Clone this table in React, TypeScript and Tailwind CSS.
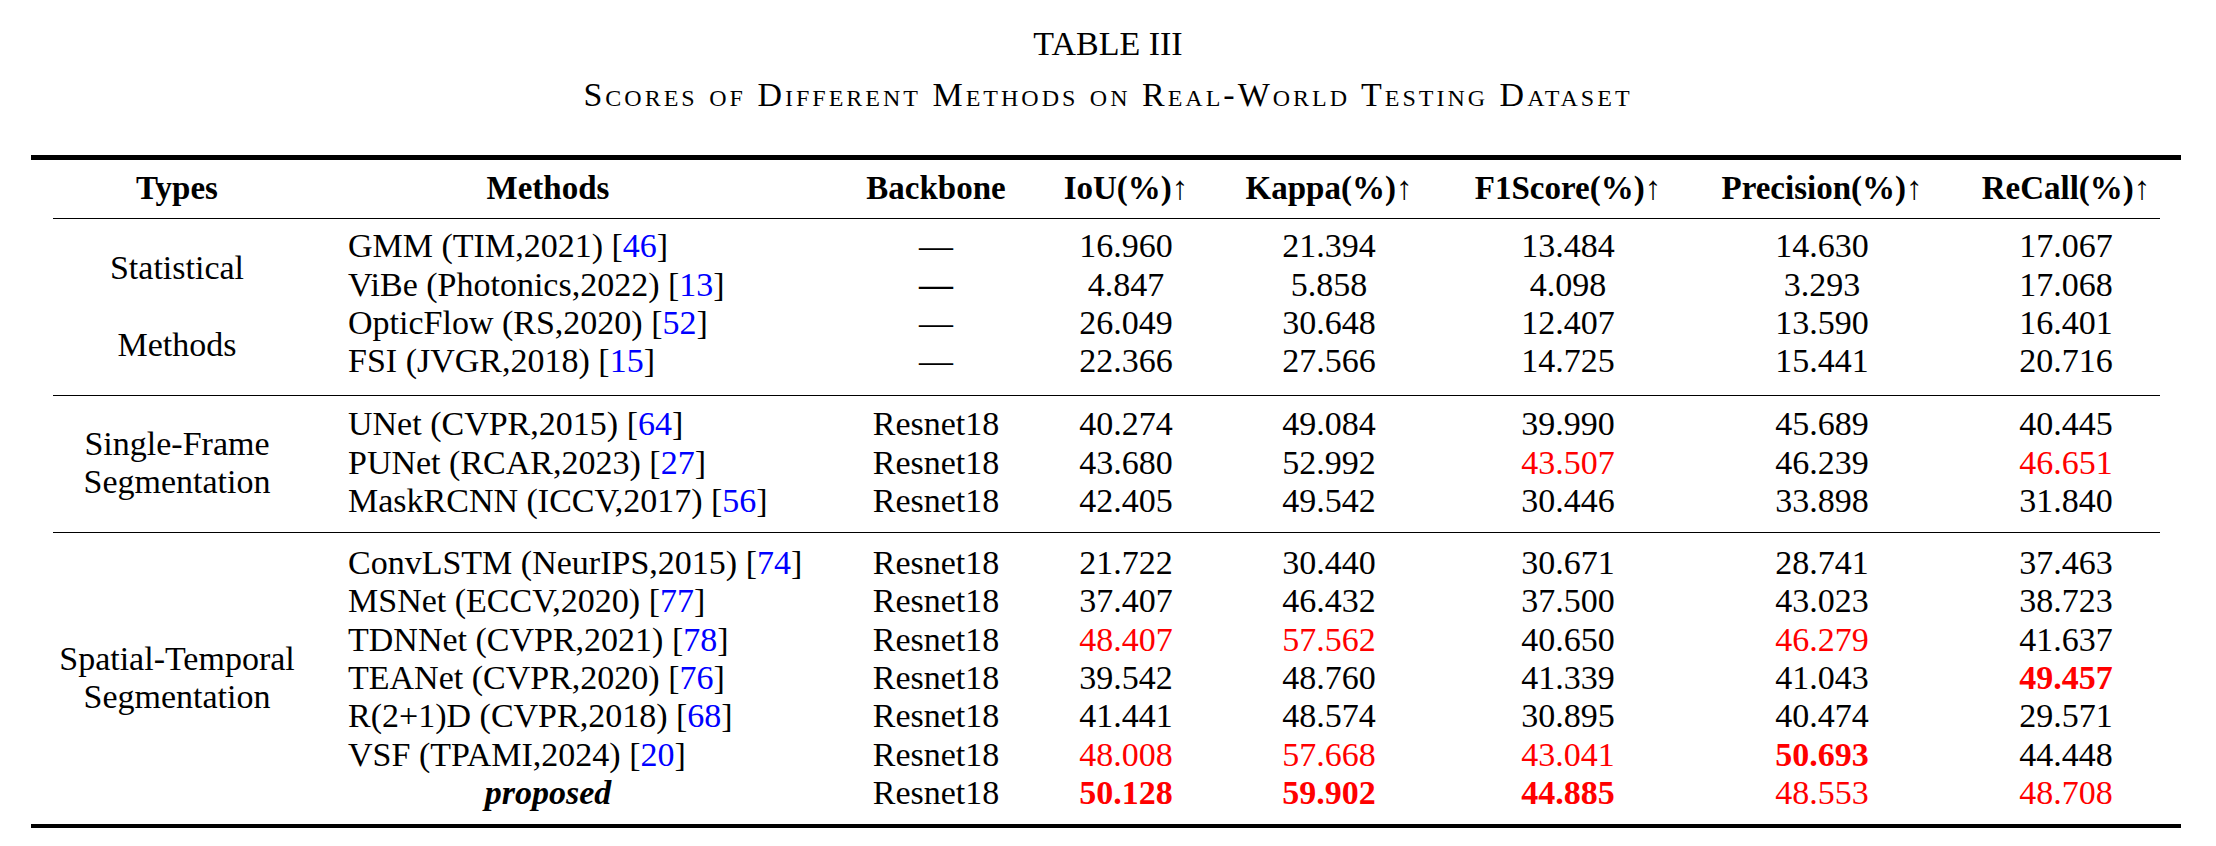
import React from "react";

type Score = { v: string; red?: boolean; bold?: boolean };

interface Row {
  method: string;
  venue: string;
  cite?: string;
  backbone: string;
  dashBold?: boolean;
  scores: Score[];
}

// "r" = red, "rb" = red bold
const s = (v: string, mark?: "r" | "rb"): Score => ({
  v,
  red: mark === "r" || mark === "rb",
  bold: mark === "rb",
});

const nums = (...vals: string[]) => vals.map((v) => s(v));

const statistical: Row[] = [
  { method: "GMM", venue: "(TIM,2021)", cite: "46", backbone: "—", scores: nums("16.960", "21.394", "13.484", "14.630", "17.067") },
  { method: "ViBe", venue: "(Photonics,2022)", cite: "13", backbone: "—", dashBold: true, scores: nums("4.847", "5.858", "4.098", "3.293", "17.068") },
  { method: "OpticFlow", venue: "(RS,2020)", cite: "52", backbone: "—", scores: nums("26.049", "30.648", "12.407", "13.590", "16.401") },
  { method: "FSI", venue: "(JVGR,2018)", cite: "15", backbone: "—", scores: nums("22.366", "27.566", "14.725", "15.441", "20.716") },
];

const singleFrame: Row[] = [
  { method: "UNet", venue: "(CVPR,2015)", cite: "64", backbone: "Resnet18", scores: nums("40.274", "49.084", "39.990", "45.689", "40.445") },
  { method: "PUNet", venue: "(RCAR,2023)", cite: "27", backbone: "Resnet18", scores: [s("43.680"), s("52.992"), s("43.507", "r"), s("46.239"), s("46.651", "r")] },
  { method: "MaskRCNN", venue: "(ICCV,2017)", cite: "56", backbone: "Resnet18", scores: nums("42.405", "49.542", "30.446", "33.898", "31.840") },
];

const spatialTemporal: Row[] = [
  { method: "ConvLSTM", venue: "(NeurIPS,2015)", cite: "74", backbone: "Resnet18", scores: nums("21.722", "30.440", "30.671", "28.741", "37.463") },
  { method: "MSNet", venue: "(ECCV,2020)", cite: "77", backbone: "Resnet18", scores: nums("37.407", "46.432", "37.500", "43.023", "38.723") },
  { method: "TDNNet", venue: "(CVPR,2021)", cite: "78", backbone: "Resnet18", scores: [s("48.407", "r"), s("57.562", "r"), s("40.650"), s("46.279", "r"), s("41.637")] },
  { method: "TEANet", venue: "(CVPR,2020)", cite: "76", backbone: "Resnet18", scores: [s("39.542"), s("48.760"), s("41.339"), s("41.043"), s("49.457", "rb")] },
  { method: "R(2+1)D", venue: "(CVPR,2018)", cite: "68", backbone: "Resnet18", scores: nums("41.441", "48.574", "30.895", "40.474", "29.571") },
  { method: "VSF", venue: "(TPAMI,2024)", cite: "20", backbone: "Resnet18", scores: [s("48.008", "r"), s("57.668", "r"), s("43.041", "r"), s("50.693", "rb"), s("44.448")] },
  { method: "proposed", venue: "", backbone: "Resnet18", scores: [s("50.128", "rb"), s("59.902", "rb"), s("44.885", "rb"), s("48.553", "r"), s("48.708", "r")] },
];

const headers = ["IoU", "Kappa", "F1Score", "Precision", "ReCall"];

// padding that re-centres a column whose track also holds the gap on its left
const scorePad = ["", "", "", "pl-[8px]", "pl-[19px]"];

const gridCols =
  "grid grid-cols-[292px_450px_253px_200px_206px_272px_228px_249px] auto-rows-[38.3px] leading-[38.3px]";

function ThinRule() {
  return <div className="h-px bg-black ml-[22px] mr-[21px]" />;
}

function TypeLabel({ lines, span, extra = "" }: { lines: string[]; span: string; extra?: string }) {
  return (
    <div className={`col-start-1 ${span} flex flex-col items-center justify-center ${extra}`}>
      {lines.map((l) => (
        <div key={l} className="whitespace-nowrap">
          {l}
        </div>
      ))}
    </div>
  );
}

function RowCells({ row }: { row: Row }) {
  return (
    <>
      {row.venue ? (
        <div className="pl-[25px] whitespace-nowrap">
          {row.method} {row.venue} [<span className="text-[#0000ff]">{row.cite}</span>]
        </div>
      ) : (
        <div className="text-center font-bold italic">{row.method}</div>
      )}
      <div className={`pl-[73px] text-center ${row.dashBold ? "font-bold" : ""}`}>
        {row.backbone}
      </div>
      {row.scores.map((sc, i) => (
        <div
          key={i}
          className={`text-center ${scorePad[i]} ${sc.red ? "text-[#ff0000]" : ""} ${sc.bold ? "font-bold" : ""}`}
        >
          {sc.v}
        </div>
      ))}
    </>
  );
}

export default function App() {
  return (
    <div className="min-h-screen bg-white text-black font-['Liberation_Serif','Times_New_Roman',serif]">
      {/* Caption */}
      <div className="pt-[24px] text-center text-[34px] leading-[40px]">
        <div>TABLE III</div>
        <div className="mt-[11px] tracking-[3px] [font-variant:small-caps]">
          Scores of Different Methods on Real-World Testing Dataset
        </div>
      </div>

      {/* Table */}
      <div className="ml-[31px] w-[2150px] mt-[40px] text-[34px]">
        <div className="h-[5px] bg-black" />

        <div className={`${gridCols} pt-[9px] pb-[11px] font-bold text-[33px]`}>
          <div className="text-center">Types</div>
          <div className="text-center">Methods</div>
          <div className="pl-[73px] text-center">Backbone</div>
          {headers.map((h, i) => (
            <div key={h} className={`text-center whitespace-nowrap ${scorePad[i]}`}>
              {h}(%)<span className="font-normal">↑</span>
            </div>
          ))}
        </div>
        <ThinRule />

        {/* Statistical methods */}
        <div className={`${gridCols} pt-[8px] pb-[15px]`}>
          <TypeLabel lines={["Statistical"]} span="row-span-2" extra="pt-[5px]" />
          <RowCells row={statistical[0]} />
          <RowCells row={statistical[1]} />
          <TypeLabel lines={["Methods"]} span="row-span-2" extra="pt-[5px]" />
          <RowCells row={statistical[2]} />
          <RowCells row={statistical[3]} />
        </div>
        <ThinRule />

        {/* Single-frame */}
        <div className={`${gridCols} pt-[9px] pb-[12px]`}>
          <TypeLabel lines={["Single-Frame", "Segmentation"]} span="row-span-3" />
          {singleFrame.map((r) => (
            <RowCells key={r.method} row={r} />
          ))}
        </div>
        <ThinRule />

        {/* Spatial-temporal */}
        <div className={`${gridCols} pt-[10.7px] pb-[12px]`}>
          <TypeLabel lines={["Spatial-Temporal", "Segmentation"]} span="row-span-7" />
          {spatialTemporal.map((r) => (
            <RowCells key={r.method} row={r} />
          ))}
        </div>
        <div className="h-[4px] bg-black" />
      </div>
    </div>
  );
}
